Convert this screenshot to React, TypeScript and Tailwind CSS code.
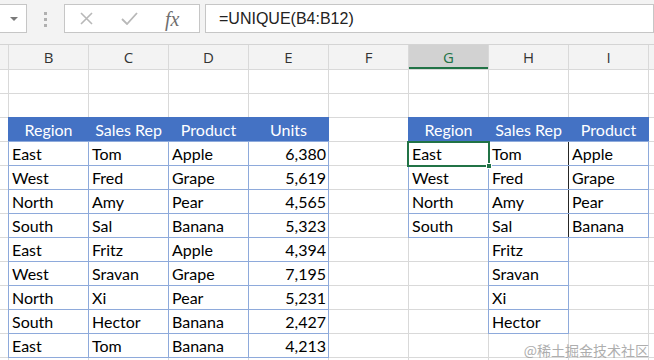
import type { ReactNode } from 'react';

type Kind = 'plain' | 'head' | 'data' | 'num' | 'dark' | 'sel';

// column J is only a sliver at the right edge, so its letter is left out
const LETTERS = ['', 'B', 'C', 'D', 'E', 'F', 'G', 'H', 'I', ''];

const leftRows = [
  ['East', 'Tom', 'Apple', '6,380'],
  ['West', 'Fred', 'Grape', '5,619'],
  ['North', 'Amy', 'Pear', '4,565'],
  ['South', 'Sal', 'Banana', '5,323'],
  ['East', 'Fritz', 'Apple', '4,394'],
  ['West', 'Sravan', 'Grape', '7,195'],
  ['North', 'Xi', 'Pear', '5,231'],
  ['South', 'Hector', 'Banana', '2,427'],
  ['East', 'Tom', 'Banana', '4,213'],
];

const uniqRegion = ['East', 'West', 'North', 'South'];
const uniqRep = ['Tom', 'Fred', 'Amy', 'Sal', 'Fritz', 'Sravan', 'Xi', 'Hector'];
const uniqProduct = ['Apple', 'Grape', 'Pear', 'Banana'];

const kindClass: Record<Kind, string> = {
  plain: 'bg-white',
  head: 'bg-[#4472c4] text-white justify-center shadow-[0_0_0_1px_#4472c4]',
  data: 'bg-white pl-[3px] shadow-[0_0_0_1px_#8eaadb]',
  num: 'bg-white justify-end pr-[2px] shadow-[0_0_0_1px_#8eaadb]',
  dark: 'bg-white pl-[3px] shadow-[-1px_0_0_0_#262626,0_0_0_1px_#8eaadb]',
  sel: 'bg-white pl-[3px] shadow-[0_0_0_1px_#8eaadb] relative z-10',
};

// row = excel row number, col = 0 (A) .. 9 (J)
function getCell(row: number, col: number): { text: string; kind: Kind } {
  if (row === 3) {
    if (col >= 1 && col <= 4) return { text: ['Region', 'Sales Rep', 'Product', 'Units'][col - 1], kind: 'head' };
    if (col >= 6 && col <= 8) return { text: ['Region', 'Sales Rep', 'Product'][col - 6], kind: 'head' };
  }
  if (row >= 4 && row <= 12) {
    const i = row - 4;
    if (col >= 1 && col <= 3) return { text: leftRows[i][col - 1], kind: 'data' };
    if (col === 4) return { text: leftRows[i][3], kind: 'num' };
    if (col === 6 && i < 4) return { text: uniqRegion[i], kind: i === 0 ? 'sel' : 'data' };
    if (col === 7 && i < 8) return { text: uniqRep[i], kind: 'data' };
    if (col === 8 && i < 4) return { text: uniqProduct[i], kind: 'dark' };
  }
  return { text: '', kind: 'plain' };
}

function Cell({ row, col }: { row: number; col: number }) {
  const { text, kind } = getCell(row, col);
  return (
    <div className={`flex items-center overflow-visible whitespace-nowrap ${kindClass[kind]}`}>
      {text}
      {kind === 'sel' && (
        <>
          <div className="absolute left-[-2px] right-[-2px] top-[-1px] bottom-[-2px] border-2 border-[#217346]" />
          <div className="absolute right-[-4px] bottom-[-4px] h-[6px] w-[6px] border border-white bg-[#217346]" />
        </>
      )}
    </div>
  );
}

function ToolBox({ className, children }: { className: string; children?: ReactNode }) {
  return <div className={`h-[29px] border border-[#c6c6c6] bg-white ${className}`}>{children}</div>;
}

function Toolbar() {
  return (
    <div className="flex h-[45px] items-start border-b border-[#d4d4d4] bg-[#f3f3f3] pt-[4px]">
      <ToolBox className="-ml-px w-[28px] flex items-center justify-center pl-[2px]">
        <div className="h-0 w-0 border-x-[4px] border-t-[4px] border-x-transparent border-t-[#7a7a7a]" />
      </ToolBox>
      <div className="ml-[17px] mt-[8px] flex flex-col gap-[3px]">
        <div className="h-[3px] w-[3px] bg-[#b0b0b0]" />
        <div className="h-[3px] w-[3px] bg-[#b0b0b0]" />
        <div className="h-[3px] w-[3px] bg-[#b0b0b0]" />
      </div>
      <ToolBox className="ml-[17px] w-[136px] flex items-center">
        <svg className="ml-[15px]" width="13" height="13" viewBox="0 0 13 13">
          <path d="M1 1 L12 12 M12 1 L1 12" stroke="#b8b8b8" strokeWidth="1.6" fill="none" />
        </svg>
        <svg className="ml-[28px]" width="17" height="13" viewBox="0 0 17 13">
          <path d="M1 7 L6 12 L16 1" stroke="#b8b8b8" strokeWidth="1.8" fill="none" />
        </svg>
        <span className="ml-[27px] font-['Liberation_Serif',serif] text-[20px] italic leading-none text-[#6f6f6f]">
          fx
        </span>
      </ToolBox>
      <ToolBox className="ml-[5px] flex-1 flex items-center pl-[13px] font-['Liberation_Sans',sans-serif] text-[16px] text-[#222]">
        =UNIQUE(B4:B12)
      </ToolBox>
    </div>
  );
}

export default function App() {
  const rows = Array.from({ length: 13 }, (_, i) => i + 1);
  return (
    <div className="relative h-[360px] w-[654px] overflow-hidden bg-white">
      <Toolbar />
      <div className="grid grid-cols-[8px_repeat(9,79px)] grid-rows-[24px_repeat(13,23px)] gap-px bg-[#d9d9d9] font-[Lato,sans-serif] text-[16px] text-black">
        {LETTERS.map((l, c) =>
          l === 'G' ? (
            <div
              key={c}
              className="flex items-center justify-center border-b-2 border-[#217346] bg-[#d2d2d2] pt-[2px] font-['Open_Sans',sans-serif] text-[15px] text-[#217346]"
            >
              {l}
            </div>
          ) : (
            <div
              key={c}
              className="flex items-center justify-center bg-[#f3f3f3] font-['Open_Sans',sans-serif] text-[15px] text-[#333]"
            >
              {l}
            </div>
          )
        )}
        {rows.map((r) => LETTERS.map((_, c) => <Cell key={`${r}-${c}`} row={r} col={c} />))}
      </div>
      <div className="absolute bottom-[3px] right-[5px] font-['Noto_Sans_CJK_SC',sans-serif] text-[14px] leading-none text-[#9a9a9a] opacity-80">
        @稀土掘金技术社区
      </div>
    </div>
  );
}
